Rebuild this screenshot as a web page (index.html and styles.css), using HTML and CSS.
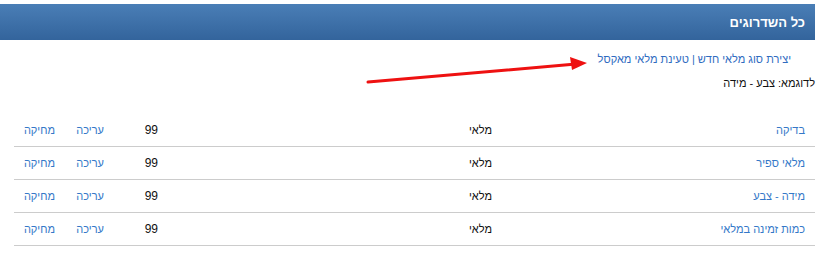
FILE: index.html
```html
<!DOCTYPE html>
<html lang="he" dir="rtl">
<head>
  <meta charset="UTF-8">
  <title>כל השדרוגים</title>
  <link rel="stylesheet" href="styles.css">
</head>
<body>
  <div class="page">
    <div class="panel-header">
      <h1>כל השדרוגים</h1>
    </div>
    <div class="actions">
      <a href="#">יצירת סוג מלאי חדש</a> | <a href="#">טעינת מלאי מאקסל</a>
    </div>
    <div class="hint">לדוגמא: צבע - מידה</div>
    <table class="upgrades">
      <tr>
        <td class="name"><a href="#">בדיקה</a></td>
        <td class="type">מלאי</td>
        <td class="qty">99</td>
        <td class="act"><a href="#">עריכה</a></td>
        <td class="act last"><a href="#">מחיקה</a></td>
      </tr>
      <tr>
        <td class="name"><a href="#">מלאי ספיר</a></td>
        <td class="type">מלאי</td>
        <td class="qty">99</td>
        <td class="act"><a href="#">עריכה</a></td>
        <td class="act last"><a href="#">מחיקה</a></td>
      </tr>
      <tr>
        <td class="name"><a href="#">מידה - צבע</a></td>
        <td class="type">מלאי</td>
        <td class="qty">99</td>
        <td class="act"><a href="#">עריכה</a></td>
        <td class="act last"><a href="#">מחיקה</a></td>
      </tr>
      <tr>
        <td class="name"><a href="#">כמות זמינה במלאי</a></td>
        <td class="type">מלאי</td>
        <td class="qty">99</td>
        <td class="act"><a href="#">עריכה</a></td>
        <td class="act last"><a href="#">מחיקה</a></td>
      </tr>
    </table>
    <!-- annotation arrow -->
    <svg class="arrow" width="240" height="40" viewBox="0 0 240 40">
      <line x1="10" y1="33" x2="218" y2="15" stroke="#ee1111" stroke-width="3" stroke-linecap="round"/>
      <polygon points="229,14 212,8 214,21" fill="#ee1111"/>
    </svg>
  </div>
</body>
</html>
```

FILE: styles.css
```css
body {
  margin: 0;
  padding-top: 4px;
  font-family: Arial, 'Liberation Sans', sans-serif;
  font-size: 11px;
  color: #222222;
  background-color: #ffffff;
}
.page {
  position: relative;
  width: 815px;
  margin-right: 6px;
}
.panel-header {
  height: 36px;
  display: flex;
  align-items: center;
  padding-right: 10px;
  background: linear-gradient(to bottom, #4a7eb6, #33649c);
}
.panel-header h1 {
  margin: 0;
  font-size: 13px;
  font-weight: bold;
  color: #ffffff;
}
a {
  color: #2f6bbf;
  text-decoration: none;
}
.actions {
  margin-top: 10px;
  padding-right: 24px;
  line-height: 18px;
  color: #2f6bbf;
}
.hint {
  margin-top: 6px;
  line-height: 18px;
  color: #111111;
}
.upgrades {
  margin-top: 22px;
  margin-right: 0;
  margin-left: 14px;
  width: 801px;
  border-collapse: collapse;
}
.upgrades td {
  height: 32px;
  padding: 0 10px 0 0;
  border-bottom: 1px solid #cccccc;
  text-align: right;
  vertical-align: middle;
  color: #111111;
}
.upgrades a {
  color: #3478c8;
}
.upgrades .name {
  width: 303px;
}
.upgrades .type {
  width: 324px;
}
.upgrades .qty {
  width: 44px;
  font-size: 12px;
}
.upgrades .act {
  width: 39px;
}
.upgrades .act.last {
  width: 41px;
}
.arrow {
  position: absolute;
  left: 358px;
  top: 45px;
}
```
